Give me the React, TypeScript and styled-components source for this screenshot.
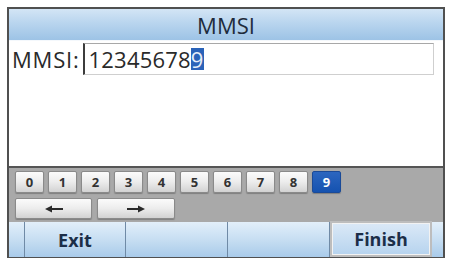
import React from "react";
import styled, { createGlobalStyle } from "styled-components";

const Global = createGlobalStyle`
  html, body { margin: 0; padding: 0; background: #ffffff; }
  body { font-family: "Open Sans", "Liberation Sans", sans-serif; }
`;

const Page = styled.div`
  padding: 7px 0 0 7px;
`;

const Frame = styled.div`
  width: 438px;
  box-sizing: border-box;
  border: 2px solid #505050;
  border-bottom-width: 1px;
  display: flex;
  flex-direction: column;
  background: #ffffff;
`;

const TitleBar = styled.div`
  height: 31px;
  display: flex;
  align-items: center;
  justify-content: center;
  background: linear-gradient(#d3e5f5 0%, #b9d5ee 45%, #9dc3e6 100%);
  color: #1e2b3c;
  font-size: 22px;
  letter-spacing: 0px;
  border-bottom: 1px solid #f4f8fc;
`;

const Body = styled.div`
  height: 125px;
  display: flex;
  flex-direction: column;
  padding: 2px 9px 0 3px;
  box-sizing: border-box;
`;

const InputRow = styled.div`
  display: flex;
  align-items: center;
  gap: 3px;
`;

const Label = styled.span`
  font-size: 22px;
  color: #2a2a2a;
  letter-spacing: 0.8px;
`;

const InputBox = styled.div`
  flex: 1;
  height: 32px;
  box-sizing: border-box;
  border: 1px solid #cfcfcf;
  border-top-color: #a8a8a8;
  border-left: 2px solid #3c3c3c;
  display: flex;
  align-items: center;
  padding-left: 4px;
  font-size: 22px;
  color: #2a2a2a;
  letter-spacing: 0.2px;
`;

const Selected = styled.span`
  background: #2a63b9;
  color: #e6eef8;
  line-height: 22px;
  display: inline-block;
`;

const Keypad = styled.div`
  border-top: 2px solid #555555;
  background: #a9a9a9;
  padding: 3px 6px 3px 6px;
  display: flex;
  flex-direction: column;
  gap: 5px;
`;

const KeyRow = styled.div`
  display: flex;
  gap: 4px;
`;

const Key = styled.div<{ $w?: number; $h?: number; $active?: boolean }>`
  width: ${(p) => p.$w ?? 29}px;
  height: ${(p) => p.$h ?? 22}px;
  box-sizing: border-box;
  display: flex;
  align-items: center;
  justify-content: center;
  border: 1px solid ${(p) => (p.$active ? "#1a4a98" : "#8a8a8a")};
  border-radius: 2px;
  background: ${(p) =>
    p.$active
      ? "linear-gradient(#2c66bf, #1552b0)"
      : "linear-gradient(#fbfbfb, #ececec 50%, #d2d2d2)"};
  color: ${(p) => (p.$active ? "#ffffff" : "#333333")};
  font-weight: 700;
  font-size: 13px;
  box-shadow: 0 1px 1px rgba(0, 0, 0, 0.25);
`;

const ArrowRow = styled(KeyRow)`
  gap: 5px;
`;

const BottomBar = styled.div`
  height: 35px;
  display: grid;
  grid-template-columns: 16px 101px 102px 102px 102px 1fr;
  background: linear-gradient(#e2effa 0%, #c7def2 50%, #a9cbea 100%);
`;

const Cell = styled.div`
  display: flex;
  align-items: center;
  justify-content: center;
  border-right: 1px solid #6f8aa6;
  color: #1c2e48;
  font-weight: 700;
  font-size: 18px;
  &:last-child { border-right: none; }
`;

const FinishCell = styled.div`
  display: flex;
  padding: 0;
  margin-top: -1px;
`;

const FinishButton = styled.div`
  flex: 1;
  display: flex;
  align-items: center;
  justify-content: center;
  border: 2px solid #bdbdbd;
  box-shadow: inset 0 0 0 1px #f2f2f2;
  background: linear-gradient(#dbe9f7, #b6d3ee);
  color: #1c2e48;
  font-weight: 700;
  font-size: 18px;
`;

const Arrow = ({ dir }: { dir: "left" | "right" }) => (
  <svg width="18" height="8" viewBox="0 0 18 8">
    {dir === "left" ? (
      <>
        <rect x="5" y="3" width="13" height="2" fill="#2a2a2a" />
        <polygon points="0,4 7,0.5 7,7.5" fill="#2a2a2a" />
      </>
    ) : (
      <>
        <rect x="0" y="3" width="13" height="2" fill="#2a2a2a" />
        <polygon points="18,4 11,0.5 11,7.5" fill="#2a2a2a" />
      </>
    )}
  </svg>
);

const digits = ["0", "1", "2", "3", "4", "5", "6", "7", "8", "9"];

export default function App() {
  return (
    <Page>
      <Global />
      <Frame>
        <TitleBar>MMSI</TitleBar>
        <Body>
          <InputRow>
            <Label>MMSI:</Label>
            <InputBox>
              12345678<Selected>9</Selected>
            </InputBox>
          </InputRow>
        </Body>
        <Keypad>
          <KeyRow>
            {digits.map((d) => (
              <Key key={d} $active={d === "9"}>
                {d}
              </Key>
            ))}
          </KeyRow>
          <ArrowRow>
            <Key $w={77} $h={21}>
              <Arrow dir="left" />
            </Key>
            <Key $w={78} $h={21}>
              <Arrow dir="right" />
            </Key>
          </ArrowRow>
        </Keypad>
        <BottomBar>
          <Cell />
          <Cell>Exit</Cell>
          <Cell />
          <Cell />
          <FinishCell>
            <FinishButton>Finish</FinishButton>
          </FinishCell>
          <Cell />
        </BottomBar>
      </Frame>
    </Page>
  );
}
